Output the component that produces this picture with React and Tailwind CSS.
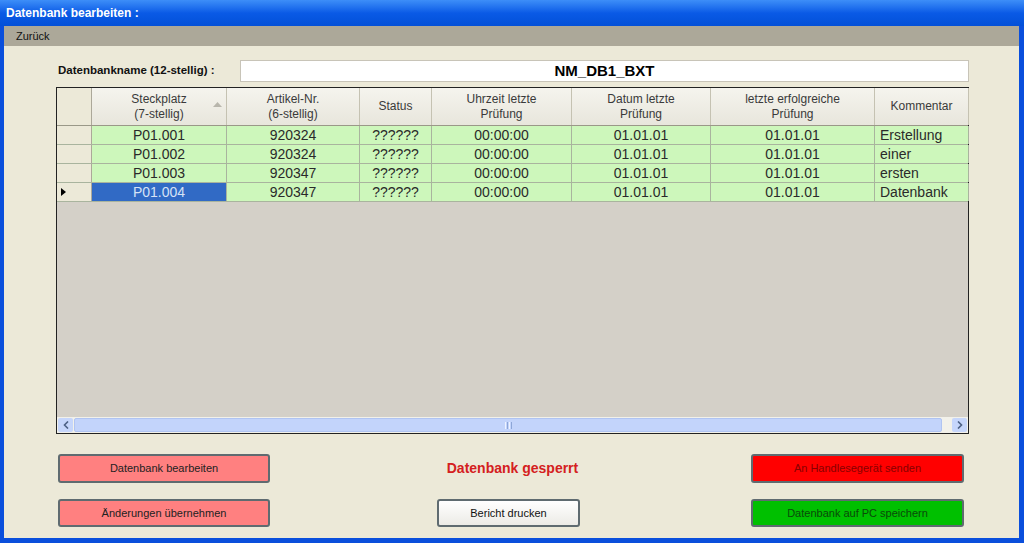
import React from "react";

const cols = [
  { w: 135, h: ["Steckplatz", "(7-stellig)"], sort: true },
  { w: 133, h: ["Artikel-Nr.", "(6-stellig)"] },
  { w: 72, h: ["Status"] },
  { w: 140, h: ["Uhrzeit letzte", "Prüfung"] },
  { w: 139, h: ["Datum letzte", "Prüfung"] },
  { w: 164, h: ["letzte erfolgreiche", "Prüfung"] },
  { w: 94, h: ["Kommentar"] },
];

const rows = [
  ["P01.001", "920324", "??????", "00:00:00", "01.01.01", "01.01.01", "Erstellung"],
  ["P01.002", "920324", "??????", "00:00:00", "01.01.01", "01.01.01", "einer"],
  ["P01.003", "920347", "??????", "00:00:00", "01.01.01", "01.01.01", "ersten"],
  ["P01.004", "920347", "??????", "00:00:00", "01.01.01", "01.01.01", "Datenbank"],
];

function Btn({ children, cls, w }) {
  return (
    <div
      className={`flex items-center justify-center rounded-[3px] border-2 border-[#5f6b70] text-[11px] ${cls}`}
      style={{ width: w }}
    >
      {children}
    </div>
  );
}

export default function App() {
  return (
    <div
      className="w-[1024px] h-[543px] flex flex-col bg-[#0a4fdc] overflow-hidden"
      style={{ fontFamily: '"Liberation Sans", Arial, sans-serif' }}
    >
      {/* title bar */}
      <div className="h-[26px] shrink-0 flex items-center pl-[6px] bg-gradient-to-b from-[#3d8ef8] via-[#0a5ae6] to-[#0350d8]">
        <span className="text-white font-bold text-[12px]">Datenbank bearbeiten :</span>
      </div>
      <div className="flex-1 flex flex-col ml-[4px] mr-[5px] mb-[5px] bg-[#ece9d8]">
        {/* menu */}
        <div className="h-[20px] shrink-0 bg-[#aca899] flex items-center pl-[12px] text-[11px] text-[#111]">
          Zurück
        </div>
        <div className="flex-1 flex flex-col">
          {/* name row */}
          <div className="flex items-center h-[22px] mt-[14px]">
            <div className="w-[236px] pl-[54px] text-[11.5px] font-bold text-[#111] whitespace-nowrap">
              Datenbankname (12-stellig) :
            </div>
            <div className="w-[729px] h-[22px] bg-white border border-[#c8c4b8] flex items-center justify-center text-[15px] font-bold text-black">
              NM_DB1_BXT
            </div>
          </div>
          {/* grid */}
          <div className="ml-[52px] mt-[5px] w-[913px] h-[347px] border border-[#222] bg-[#d4d0c8] flex flex-col">
            {/* header */}
            <div className="flex h-[38px] shrink-0 border-b border-[#9a9888]">
              <div className="w-[35px] shrink-0 bg-[#ece9d8] border-r border-[#aca899]" />
              {cols.map((c, i) => (
                <div
                  key={i}
                  className="relative shrink-0 bg-gradient-to-b from-[#f5f4ee] to-[#e8e6dc] border-r border-[#c5c2b2] flex flex-col items-center justify-center text-[12px] leading-[15px] text-[#3a3a3a]"
                  style={{ width: c.w }}
                >
                  {c.h.map((t, j) => (
                    <span key={j}>{t}</span>
                  ))}
                  {c.sort && (
                    <svg className="absolute right-[4px] top-[14px]" width="9" height="5" viewBox="0 0 9 5">
                      <path d="M0 5 L4.5 0 L9 5 Z" fill="#b8b6ac" />
                    </svg>
                  )}
                </div>
              ))}
            </div>
            {/* rows */}
            {rows.map((r, ri) => (
              <div key={ri} className="flex h-[19px] shrink-0 border-b border-[#a9b49e]">
                <div className="w-[35px] shrink-0 bg-[#ece9d8] border-r border-[#aca899] flex items-center pl-[4px]">
                  {ri === 3 && (
                    <svg width="5" height="8" viewBox="0 0 5 8">
                      <path d="M0 0 L5 4 L0 8 Z" fill="#000" />
                    </svg>
                  )}
                </div>
                {r.map((v, ci) => {
                  const sel = ri === 3 && ci === 0;
                  return (
                    <div
                      key={ci}
                      className={`shrink-0 flex items-center text-[14px] border-r border-[#a9b49e] ${
                        ci === 6 ? "justify-start pl-[5px]" : "justify-center"
                      } ${sel ? "bg-[#316ac5] text-[#d6e2f6]" : "bg-[#cdf7bb] text-[#2a2a2a]"}`}
                      style={{ width: cols[ci].w }}
                    >
                      {v}
                    </div>
                  );
                })}
              </div>
            ))}
            <div className="flex-1" />
            {/* scrollbar */}
            <div className="h-[16px] shrink-0 flex items-center bg-[#f2f1ea] gap-[1px] px-[1px]">
              <div className="w-[15px] h-[14px] bg-[#c6d6fb] rounded-[2px] flex items-center justify-center">
                <svg width="6" height="8" viewBox="0 0 6 8">
                  <path d="M5 0.5 L1.5 4 L5 7.5" stroke="#4d6185" strokeWidth="1.6" fill="none" />
                </svg>
              </div>
              <div className="flex-1 h-[14px] bg-[#c3d4fb] border border-[#b0c4f2] rounded-[2px] flex items-center justify-center">
                <div className="flex gap-[1px]">
                  <div className="w-[1px] h-[7px] bg-[#eef3ff]" />
                  <div className="w-[1px] h-[7px] bg-[#8da6d8]" />
                  <div className="w-[1px] h-[7px] bg-[#eef3ff]" />
                  <div className="w-[1px] h-[7px] bg-[#8da6d8]" />
                </div>
              </div>
              <div className="w-[8px]" />
              <div className="w-[15px] h-[14px] bg-[#c6d6fb] rounded-[2px] flex items-center justify-center">
                <svg width="6" height="8" viewBox="0 0 6 8">
                  <path d="M1 0.5 L4.5 4 L1 7.5" stroke="#4d6185" strokeWidth="1.6" fill="none" />
                </svg>
              </div>
            </div>
          </div>
          {/* buttons */}
          <div className="flex items-center justify-between pl-[54px] pr-[55px] mt-[20px] h-[29px]">
            <Btn w={212} cls="h-[29px] bg-[#ff8080] text-[#222]">Datenbank bearbeiten</Btn>
            <div className="text-[14px] font-bold text-[#d42020] pl-[4px]">Datenbank gesperrt</div>
            <Btn w={213} cls="h-[29px] bg-[#ff0000] text-[#880000]">An Handlesegerät senden</Btn>
          </div>
          <div className="flex items-center pl-[54px] mt-[16px] h-[28px]">
            <Btn w={212} cls="h-[28px] bg-[#ff8080] text-[#222]">Änderungen übernehmen</Btn>
            <div className="w-[167px]" />
            <Btn w={143} cls="h-[28px] bg-gradient-to-b from-[#ffffff] to-[#ecebe6] text-[#111]">Bericht drucken</Btn>
            <div className="w-[171px]" />
            <Btn w={213} cls="h-[28px] bg-[#00c000] text-[#0a4a0a]">Datenbank auf PC speichern</Btn>
          </div>
        </div>
      </div>
    </div>
  );
}
